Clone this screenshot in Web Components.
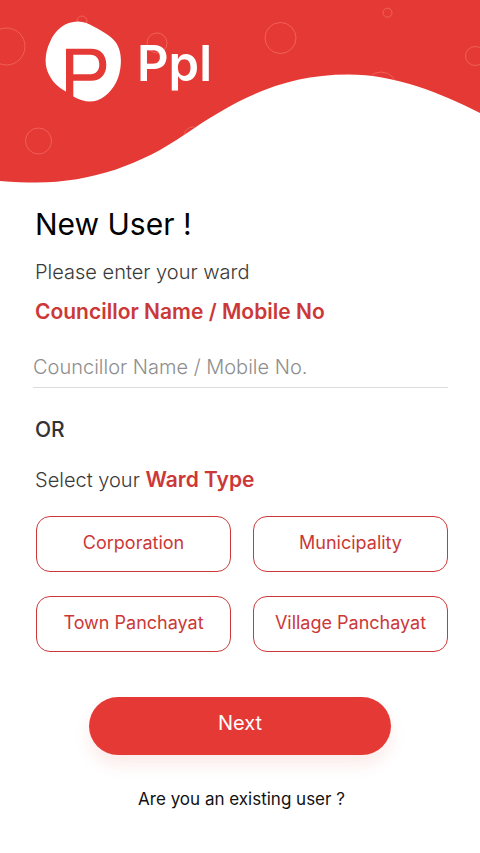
<!DOCTYPE html>
<html lang="en">
<head>
<meta charset="utf-8">
<meta name="viewport" content="width=device-width, initial-scale=1">
<title>Ppl – New User</title>
<style>
  :root { --brand: #e53935; --accent: #cc3838; --ink: #3a3a3a; }
  body { margin: 0; background: #fff; color: #111; font-family: Inter, "Liberation Sans", sans-serif; }
</style>
</head>
<body>
<signup-page></signup-page>

<script>
const define = (name, html, setup) => customElements.define(name, class extends HTMLElement {
  constructor() {
    super();
    this.attachShadow({ mode: "open" }).innerHTML = html;
  }
  connectedCallback() { if (setup) setup(this, this.shadowRoot); }
});

define("ppl-logo", `
  <style>
    :host { display: flex; align-items: center; gap: 14px; color: #fff; }
    svg { display: block; flex: none; }
    .name { padding-top: 4px; font-size: 49px; line-height: 64px; font-weight: 600; }
  </style>
  <svg width="78" height="84" viewBox="0 0 78 84" aria-hidden="true">
    <path fill="#fff" d="M33 1.6C39 1.6 44 4 49 6.700C57 11 65 15 70.500 22C75 28 76.300 36 75.800 44C75 58 69 69 60 76C53 81.500 45 83 37 80.300C33 79 30 77.500 27 75.500L20 71C11 66 4 58 1.500 48C-.5 40 1 30 5 22C10 10 20 1.600 33 1.600Z"/>
    <path fill="#e53935" fill-rule="evenodd" d="M21 28.700H46C55.500 28.700 61.300 34.500 61.300 44.700C61.300 55 55.500 60.700 46 60.700H28.300V79L21 74ZM28.300 34.700V54.200H45.500C51 54.200 54.300 50.500 54.300 44.500C54.300 38.500 51 34.700 45.500 34.700Z"/>
  </svg>
  <span class="name"><slot></slot></span>
`);

define("wave-header", `
  <style>
    :host { display: grid; }
    svg, .content { grid-area: 1 / 1; }
    svg { display: block; width: 100%; height: 190px; }
    .content { padding: 20px 45px; justify-self: start; z-index: 1; }
  </style>
  <svg viewBox="0 0 480 190" preserveAspectRatio="none" aria-hidden="true">
    <defs><clipPath id="wave"><path d="M0 0H480V113C440 93 396 74.500 348 74.500C280 74.500 232 102 184 135C142 164 92 182.500 36 182.500C26 182.500 14 182 0 181Z"/></clipPath></defs>
    <g clip-path="url(#wave)">
      <rect width="480" height="190" fill="#e53935"/>
      <g fill="none" stroke="#f4706a" stroke-width="1" stroke-opacity=".7">
        <circle cx="6.500" cy="46.500" r="18.500"/>
        <circle cx="82" cy="21" r="5"/>
        <circle cx="157" cy="43" r="10"/>
        <circle cx="38.500" cy="141" r="13"/>
        <circle cx="193" cy="136" r="9"/>
        <circle cx="280.500" cy="38" r="15.500"/>
        <circle cx="387.500" cy="12.700" r="4.500"/>
        <circle cx="475" cy="56" r="9.500"/>
        <circle cx="381" cy="88" r="16"/>
      </g>
    </g>
  </svg>
  <div class="content"><slot></slot></div>
`);

define("ward-field", `
  <style>
    :host { display: block; margin-left: -2px; }
    label { display: block; padding-left: 2px; color: var(--accent); font-size: 21px; line-height: 28px; font-weight: 600; }
    input {
      display: block; box-sizing: border-box; width: 100%; height: 48px; margin-top: 14px; padding: 6px 0 0;
      border: 0; border-bottom: 1px solid #dcdcdc; border-radius: 0; outline: 0; background: none;
      color: var(--ink); font: 300 20px/28px Inter, "Liberation Sans", sans-serif;
    }
    input::placeholder { color: #8e8e8e; opacity: 1; }
    input:focus { border-color: var(--brand); }
  </style>
  <label for="ward"><slot></slot></label>
  <input id="ward" type="text">
`, (host, root) => { root.querySelector("input").placeholder = host.getAttribute("placeholder") || ""; });

define("ward-option", `
  <style>
    :host { display: block; }
    button {
      display: block; box-sizing: border-box; width: 100%; height: 56px; padding: 0 0 2px;
      border: 1px solid var(--accent); border-radius: 14px; background: #fff; color: var(--accent);
      font: 400 18px/24px Inter, "Liberation Sans", sans-serif; white-space: nowrap; cursor: pointer;
    }
  </style>
  <button type="button"><slot></slot></button>
`);

define("primary-button", `
  <style>
    :host { display: block; }
    button {
      display: block; width: 100%; height: 58px; padding: 0 0 6px; border: 0; border-radius: 29px;
      background: var(--brand); color: #fff; box-shadow: 0 10px 16px rgba(229, 57, 53, .1);
      font: 400 20px/28px Inter, "Liberation Sans", sans-serif; cursor: pointer;
    }
  </style>
  <button type="submit"><slot></slot></button>
`);

define("signup-page", `
  <style>
    :host { display: block; }
    main { padding: 14px 32px 40px 35px; }
    h1 { margin: 0; color: #000; font-size: 30px; line-height: 40px; font-weight: 400; }
    p { margin: 0; color: var(--ink); font-size: 20px; line-height: 28px; font-weight: 300; }
    .lead { margin: 14px 0 12px; }
    .or { margin: 28px 0 22px; color: #333; font-size: 21px; font-weight: 500; }
    strong { color: var(--accent); font-size: 21px; font-weight: 600; }
    .options { display: grid; grid-template-columns: 1fr 1fr; gap: 24px 22px; margin-top: 22px; padding-left: 1px; }
    primary-button { margin: 45px 57px 0 54px; }
    .existing { margin-top: 30px; font-size: 17px; text-align: center; }
    a { color: #111; font-weight: 400; text-decoration: none; }
  </style>
  <wave-header><ppl-logo>Ppl</ppl-logo></wave-header>
  <main>
    <h1>New User !</h1>
    <p class="lead">Please enter your ward</p>
    <ward-field placeholder="Councillor Name / Mobile No.">Councillor Name / Mobile No</ward-field>
    <p class="or">OR</p>
    <p>Select your <strong>Ward Type</strong></p>
    <div class="options">
      <ward-option>Corporation</ward-option>
      <ward-option>Municipality</ward-option>
      <ward-option>Town Panchayat</ward-option>
      <ward-option>Village Panchayat</ward-option>
    </div>
    <primary-button>Next</primary-button>
    <p class="existing"><a href="#login">Are you an existing user ?</a></p>
  </main>
`);
</script>
</body>
</html>
